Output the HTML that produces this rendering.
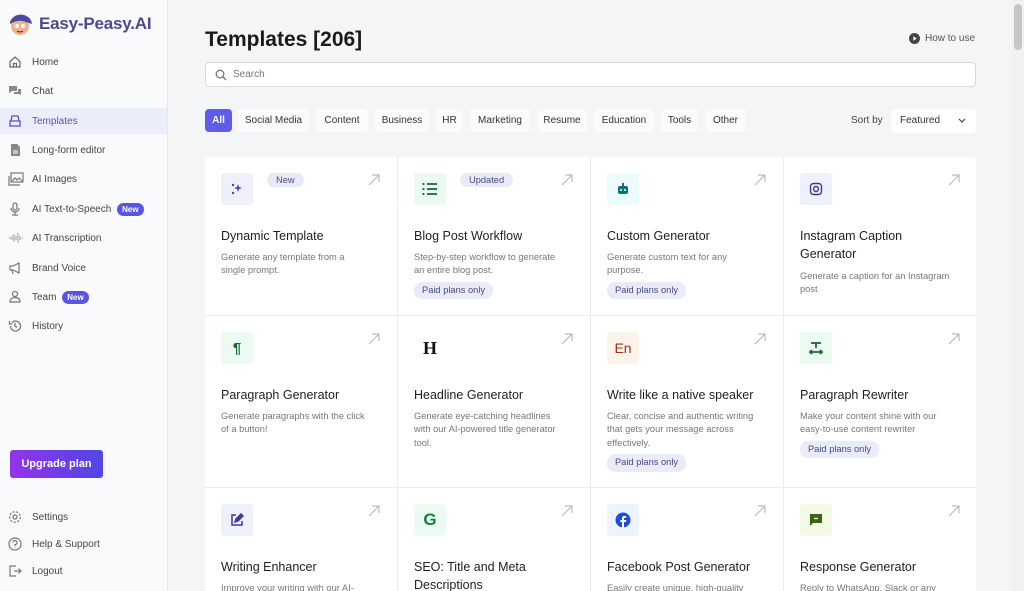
<!DOCTYPE html>
<html><head><meta charset="utf-8"><style>
*{box-sizing:border-box;margin:0;padding:0}
html,body{width:1024px;height:591px;overflow:hidden}
body{font-family:"Liberation Sans",sans-serif;background:#f4f5f7;position:relative;color:#222}
.sb{position:absolute;left:0;top:0;width:168px;height:591px;background:#f9fafc;border-right:1px solid #e6e7eb}
.logo{position:absolute;left:8px;top:12px;display:flex;align-items:center}
.logo span{font-weight:bold;font-size:17px;color:#4a4a8c;margin-left:5px;letter-spacing:-0.2px}
.nav{position:absolute;left:0;width:167px;height:26px;display:flex;align-items:center;font-size:10px;color:#444}
.nav svg{position:absolute;left:8px}
.nav b{font-weight:normal;position:absolute;left:32px}
.nav.act{background:#ebedfb;color:#5555b0}
.new{background:#5a55e0;color:#fff;font-size:8px;font-weight:bold;border-radius:8px;padding:2px 5px;margin-left:3px}
.up{position:absolute;left:10px;top:450px;width:93px;height:28px;border-radius:3px;background:linear-gradient(90deg,#9333ea,#5046e5);color:#fff;font-size:11px;font-weight:bold;display:flex;align-items:center;justify-content:center}
h1{position:absolute;left:205px;top:28px;font-size:21px;font-weight:bold;color:#1a1a1a}
.how{position:absolute;left:909px;top:33px;font-size:10px;color:#555;display:flex;align-items:center;gap:5px}
.search{position:absolute;left:205px;top:62px;width:771px;height:25px;background:#fff;border:1px solid #d8dade;border-radius:4px;font-size:10px;color:#777;padding-left:27px;line-height:23px}
.chip{position:absolute;top:109px;height:23px;border-radius:4px;background:#fbfbfc;font-size:10px;color:#333;line-height:23px;text-align:center}
.sort{position:absolute;left:851px;top:115px;font-size:10px;color:#444}
.sel{position:absolute;left:891px;top:109px;width:85px;height:24px;background:#fff;border-radius:4px;font-size:10px;color:#333;line-height:24px;padding-left:9px}
.grid{position:absolute;left:205px;top:157px;width:771px;height:434px;background:#fff;border-radius:4px 4px 0 0;overflow:hidden}
.c{position:absolute;width:193px;border-right:1px solid #ececee;border-bottom:1px solid #ececee}
.ic{position:absolute;left:16px;top:16px;width:32px;height:32px;border-radius:3px;display:flex;align-items:center;justify-content:center}
.ar{position:absolute;right:17px;top:17px}
.t{position:absolute;left:16px;top:70px;font-size:12.5px;color:#1f1f1f;line-height:18px;width:150px}
.d{position:absolute;left:16px;top:94px;font-size:9.3px;color:#777;line-height:13.4px;width:150px}
.p{display:inline-block;margin-top:4px;background:#e9ebf7;color:#4a4a86;font-size:9.3px;border-radius:8px;padding:2px 8px}
.tag{position:absolute;top:16px;background:#e8eaf6;color:#4a4a86;font-size:9.3px;border-radius:8px;padding:2px 9px}
.scroll{position:absolute;right:0;top:0;width:12px;height:591px;background:#f1f1f1}
.scroll div{position:absolute;left:2px;top:4px;width:8px;height:46px;background:#c6c6c6;border-radius:4px}
</style></head><body>
<div class="sb">
<div class="logo"><svg width="26" height="24" viewBox="0 0 26 24"><circle cx="12" cy="14" r="9" fill="#f0b48a"/><path d="M2 10 Q6 1 16 3 Q23 5 24 12 L18 10 Q10 7 2 12Z" fill="#4a4aa0"/><circle cx="9" cy="14" r="2" fill="#fff"/><circle cx="15" cy="14" r="2" fill="#fff"/><path d="M9 19 Q12 21 15 19" stroke="#803" fill="none"/></svg><span>Easy-Peasy.AI</span></div>
<div class="nav" style="top:49px"><svg width="14" height="14" viewBox="0 0 14 14" fill="none" stroke="#666" stroke-width="1.2"><path d="M2 6.5 7 2l5 4.5V12H2z M5.5 12V8.5h3V12"/></svg><b>Home</b></div>
<div class="nav" style="top:78px"><svg width="14" height="14" viewBox="0 0 14 14" fill="#888"><path d="M1 2h8v5H4l-3 2z"/><path d="M10 5h3v6l-2-1H6V8h4z"/></svg><b>Chat</b></div>
<div class="nav act" style="top:108px"><svg width="14" height="14" viewBox="0 0 14 14" fill="none" stroke="#5555b0" stroke-width="1.3"><path d="M4 2h6l1 5H3z M2 7h10v5H2z"/></svg><b>Templates</b></div>
<div class="nav" style="top:137px"><svg width="14" height="14" viewBox="0 0 14 14" fill="#888"><path d="M3 1h6l3 3v9H3z"/><path d="M5 8h5M5 10h5" stroke="#fff"/></svg><b>Long-form editor</b></div>
<div class="nav" style="top:166px"><svg width="16" height="14" viewBox="0 0 16 14" fill="none" stroke="#777" stroke-width="1.2"><rect x="3" y="1" width="12" height="9"/><path d="M1 4v9h11 M4 9l3-3 2 2 2-2 3 3"/></svg><b>AI Images</b></div>
<div class="nav" style="top:196px"><svg width="14" height="14" viewBox="0 0 14 14" fill="none" stroke="#777" stroke-width="1.2"><rect x="5" y="1" width="4" height="7" rx="2"/><path d="M3 6a4 4 0 0 0 8 0M7 10v3M4 13h6"/></svg><b>AI Text-to-Speech <span class="new">New</span></b></div>
<div class="nav" style="top:225px"><svg width="16" height="14" viewBox="0 0 16 14" stroke="#aaa" stroke-width="1.2"><path d="M1 7h2M4 5v4M6 3v8M8 5v4M10 2v10M12 5v4M14 7h1"/></svg><b>AI Transcription</b></div>
<div class="nav" style="top:255px"><svg width="14" height="14" viewBox="0 0 14 14" fill="none" stroke="#777" stroke-width="1.2"><path d="M2 5h3l6-3v10L5 9H2z M4 9l1 4"/></svg><b>Brand Voice</b></div>
<div class="nav" style="top:284px"><svg width="14" height="14" viewBox="0 0 14 14" fill="none" stroke="#777" stroke-width="1.2"><circle cx="7" cy="4" r="2.5"/><path d="M2 12c0-3 2-4.5 5-4.5s5 1.5 5 4.5z"/></svg><b>Team <span class="new">New</span></b></div>
<div class="nav" style="top:313px"><svg width="14" height="14" viewBox="0 0 14 14" fill="none" stroke="#777" stroke-width="1.3"><path d="M2.5 7a5 5 0 1 0 1.5-3.5M1.5 2v3h3M7 4v3l2 1.5"/></svg><b>History</b></div>
<div class="up">Upgrade plan</div>
<div class="nav" style="top:504px"><svg width="14" height="14" viewBox="0 0 14 14" fill="none" stroke="#777" stroke-width="1.2"><circle cx="7" cy="7" r="2"/><circle cx="7" cy="7" r="5.3" stroke-dasharray="2.2 1.5"/></svg><b>Settings</b></div>
<div class="nav" style="top:531px"><svg width="14" height="14" viewBox="0 0 14 14" fill="none" stroke="#777" stroke-width="1.2"><circle cx="7" cy="7" r="6"/><path d="M5 5.5a2 2 0 1 1 2 2V9M7 10.5v.5"/></svg><b>Help &amp; Support</b></div>
<div class="nav" style="top:558px"><svg width="14" height="14" viewBox="0 0 14 14" fill="none" stroke="#777" stroke-width="1.2"><path d="M8 2H2v10h6M6 7h7M10.5 4.5 13 7l-2.5 2.5"/></svg><b>Logout</b></div>
</div>
<h1>Templates [206]</h1>
<div class="how"><svg width="11" height="11" viewBox="0 0 11 11"><circle cx="5.5" cy="5.5" r="5.5" fill="#444"/><path d="M4.3 3.2v4.6l3.5-2.3z" fill="#fff"/></svg>How to use</div>
<div class="search"><svg style="position:absolute;left:9px;top:6px" width="12" height="12" viewBox="0 0 12 12" fill="none" stroke="#777" stroke-width="1.3"><circle cx="5" cy="5" r="3.8"/><path d="M8 8l3 3"/></svg>Search</div>
<div class="chip" style="left:205px;width:27px;background:#5f5ce8;color:#fff;font-weight:bold">All</div>
<div class="chip" style="left:238px;width:71px">Social Media</div>
<div class="chip" style="left:316px;width:52px">Content</div>
<div class="chip" style="left:375px;width:54px">Business</div>
<div class="chip" style="left:436px;width:27px">HR</div>
<div class="chip" style="left:470px;width:60px">Marketing</div>
<div class="chip" style="left:537px;width:50px">Resume</div>
<div class="chip" style="left:594px;width:60px">Education</div>
<div class="chip" style="left:661px;width:37px">Tools</div>
<div class="chip" style="left:705px;width:41px">Other</div>
<div class="sort">Sort by</div>
<div class="sel">Featured<svg style="position:absolute;right:10px;top:9px" width="8" height="6" viewBox="0 0 8 6" fill="none" stroke="#444" stroke-width="1.2"><path d="M1 1l3 3 3-3"/></svg></div>
<div class="grid">
<div class="c" style="left:0;top:0;height:159px"><div class="ic" style="background:#eef0fc"><svg width="14" height="14" viewBox="0 0 14 14" fill="#4a44b0"><path d="M8 2l1 3 3 1-3 1-1 3-1-3-3-1 3-1z"/><circle cx="3" cy="3" r="1.2"/><circle cx="3" cy="11" r="1.2"/></svg></div><div class="tag" style="left:62px">New</div><svg class="ar" width="12" height="12" viewBox="0 0 12 12" stroke="#bbb" stroke-width="1.2" fill="none"><path d="M1 11 11 1M4 1h7v7"/></svg><div class="t">Dynamic Template</div><div class="d">Generate any template from a single prompt.</div></div>
<div class="c" style="left:193px;top:0;height:159px"><div class="ic" style="background:#ecfbf1"><svg width="16" height="14" viewBox="0 0 16 14" stroke="#166534" stroke-width="1.8"><path d="M5 2h10M5 7h10M5 12h10M1.5 1v2M1.5 6v2M1.5 11v2"/></svg></div><div class="tag" style="left:62px">Updated</div><svg class="ar" width="12" height="12" viewBox="0 0 12 12" stroke="#bbb" stroke-width="1.2" fill="none"><path d="M1 11 11 1M4 1h7v7"/></svg><div class="t">Blog Post Workflow</div><div class="d">Step-by-step workflow to generate an entire blog post.<br><span class="p">Paid plans only</span></div></div>
<div class="c" style="left:386px;top:0;height:159px"><div class="ic" style="background:#ecfbfb"><svg width="14" height="14" viewBox="0 0 14 14" fill="#0e6f7a"><rect x="2" y="4" width="10" height="8" rx="2"/><rect x="6" y="1" width="2" height="3"/><circle cx="5" cy="8" r="1" fill="#fff"/><circle cx="9" cy="8" r="1" fill="#fff"/></svg></div><svg class="ar" width="12" height="12" viewBox="0 0 12 12" stroke="#bbb" stroke-width="1.2" fill="none"><path d="M1 11 11 1M4 1h7v7"/></svg><div class="t">Custom Generator</div><div class="d">Generate custom text for any purpose.<br><span class="p">Paid plans only</span></div></div>
<div class="c" style="left:579px;top:0;height:159px;border-right:none"><div class="ic" style="background:#eef0fc"><svg width="14" height="14" viewBox="0 0 14 14" fill="none" stroke="#3b3b8a" stroke-width="1.4"><rect x="1.5" y="1.5" width="11" height="11" rx="3"/><circle cx="7" cy="7" r="2.5"/></svg></div><svg class="ar" width="12" height="12" viewBox="0 0 12 12" stroke="#bbb" stroke-width="1.2" fill="none"><path d="M1 11 11 1M4 1h7v7"/></svg><div class="t" style="width:130px">Instagram Caption Generator</div><div class="d" style="top:113px">Generate a caption for an Instagram post</div></div>
<div class="c" style="left:0;top:159px;height:172px"><div class="ic" style="background:#ecfbf1;color:#166534;font-weight:bold;font-size:15px">¶</div><svg class="ar" width="12" height="12" viewBox="0 0 12 12" stroke="#bbb" stroke-width="1.2" fill="none"><path d="M1 11 11 1M4 1h7v7"/></svg><div class="t">Paragraph Generator</div><div class="d">Generate paragraphs with the click of a button!</div></div>
<div class="c" style="left:193px;top:159px;height:172px"><div class="ic" style="font-family:'Liberation Serif',serif;font-weight:bold;font-size:18px;color:#111">H</div><svg class="ar" width="12" height="12" viewBox="0 0 12 12" stroke="#bbb" stroke-width="1.2" fill="none"><path d="M1 11 11 1M4 1h7v7"/></svg><div class="t">Headline Generator</div><div class="d">Generate eye-catching headlines with our AI-powered title generator tool.</div></div>
<div class="c" style="left:386px;top:159px;height:172px"><div class="ic" style="background:#fdf3ea;color:#9a3412;font-size:14px">En</div><svg class="ar" width="12" height="12" viewBox="0 0 12 12" stroke="#bbb" stroke-width="1.2" fill="none"><path d="M1 11 11 1M4 1h7v7"/></svg><div class="t">Write like a native speaker</div><div class="d">Clear, concise and authentic writing that gets your message across effectively.<br><span class="p">Paid plans only</span></div></div>
<div class="c" style="left:579px;top:159px;height:172px;border-right:none"><div class="ic" style="background:#ecfbf1"><svg width="16" height="14" viewBox="0 0 16 14" stroke="#166534" stroke-width="1.8" fill="none"><path d="M3 2h10M8 2v5M2 11h12M4 9l-2 2 2 2M12 9l2 2-2 2"/></svg></div><svg class="ar" width="12" height="12" viewBox="0 0 12 12" stroke="#bbb" stroke-width="1.2" fill="none"><path d="M1 11 11 1M4 1h7v7"/></svg><div class="t">Paragraph Rewriter</div><div class="d">Make your content shine with our easy-to-use content rewriter<br><span class="p">Paid plans only</span></div></div>
<div class="c" style="left:0;top:331px;height:120px"><div class="ic" style="background:#eef0fc"><svg width="14" height="14" viewBox="0 0 14 14" fill="none" stroke="#3b3ba0" stroke-width="1.5"><path d="M12 8v4H2V2h4"/><path d="M5 9l1-3 5-5 2 2-5 5z" fill="#3b3ba0"/></svg></div><svg class="ar" width="12" height="12" viewBox="0 0 12 12" stroke="#bbb" stroke-width="1.2" fill="none"><path d="M1 11 11 1M4 1h7v7"/></svg><div class="t">Writing Enhancer</div><div class="d">Improve your writing with our AI-</div></div>
<div class="c" style="left:193px;top:331px;height:120px"><div class="ic" style="background:#ecfbf1;color:#15803d;font-weight:bold;font-size:17px">G</div><svg class="ar" width="12" height="12" viewBox="0 0 12 12" stroke="#bbb" stroke-width="1.2" fill="none"><path d="M1 11 11 1M4 1h7v7"/></svg><div class="t">SEO: Title and Meta Descriptions</div></div>
<div class="c" style="left:386px;top:331px;height:120px"><div class="ic" style="background:#eef3fc"><svg width="16" height="16" viewBox="0 0 16 16"><circle cx="8" cy="8" r="7.5" fill="#1d4ed8"/><path d="M9 16V10h2l.3-2H9V6.8c0-.6.2-1 1-1h1.3V4a9 9 0 0 0-1.8-.1C8 3.9 7 4.8 7 6.5V8H5.3v2H7v6z" fill="#fff"/></svg></div><svg class="ar" width="12" height="12" viewBox="0 0 12 12" stroke="#bbb" stroke-width="1.2" fill="none"><path d="M1 11 11 1M4 1h7v7"/></svg><div class="t">Facebook Post Generator</div><div class="d">Easily create unique, high-quality</div></div>
<div class="c" style="left:579px;top:331px;height:120px;border-right:none"><div class="ic" style="background:#f3fbe6"><svg width="14" height="14" viewBox="0 0 14 14"><path d="M1 1h12v9H4l-3 3z" fill="#3f6212"/><path d="M5 5.5h4" stroke="#fff" stroke-width="1.3"/></svg></div><svg class="ar" width="12" height="12" viewBox="0 0 12 12" stroke="#bbb" stroke-width="1.2" fill="none"><path d="M1 11 11 1M4 1h7v7"/></svg><div class="t">Response Generator</div><div class="d">Reply to WhatsApp, Slack or any</div></div>
</div>
<div class="scroll"><div></div></div>
</body></html>
